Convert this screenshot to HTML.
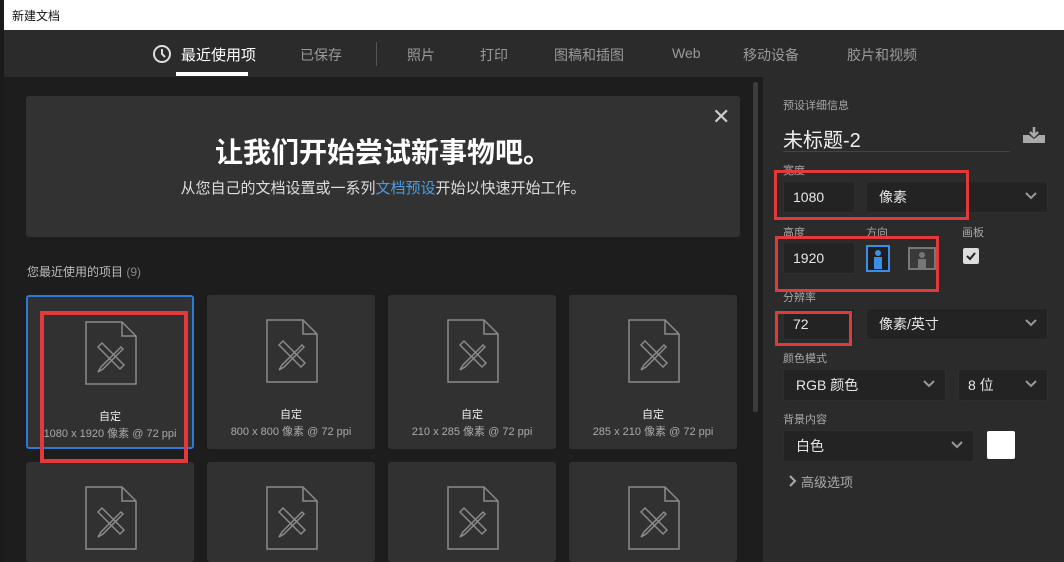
<!DOCTYPE html>
<html><head><meta charset="utf-8"><style>
*{margin:0;padding:0;box-sizing:border-box}
html,body{width:1064px;height:562px;overflow:hidden}
body{background:#1d1d1d;font-family:"Liberation Sans","Noto Sans CJK SC",sans-serif;position:relative}
.a{position:absolute}
.t{color:#9a9a9a;font-size:14px}
.card{position:absolute;background:#313131;border-radius:3px;overflow:hidden}
.card .ic{position:absolute;left:50%;margin-left:-27px;top:24px}
.card .n{position:absolute;width:100%;text-align:center;top:111px;color:#eee;font-size:11px}
.card .d{position:absolute;width:100%;text-align:center;top:128px;color:#aaa;font-size:11px}
.lbl{position:absolute;color:#a8a8a8;font-size:11px}
.box{position:absolute;background:#232323;border:1px solid #2e2e2e;border-radius:3px;color:#e6e6e6;font-size:14px;padding-left:9px;display:flex;align-items:center}
.chev{position:absolute;right:10px;top:50%;margin-top:-5px}
.red{position:absolute;border:3px solid #e23a3a}
</style></head><body>
<div class="a" style="left:0;top:0;width:1064px;height:30px;background:#fff"></div>
<div class="a" style="left:0;top:0;width:4px;height:562px;background:#1a1a1a"></div>
<div class="a" style="left:12px;top:7px;font-size:12px;color:#111">新建文档</div>
<div class="a" style="left:4px;top:30px;width:1060px;height:47px;background:#2b2b2b"></div>
<svg class="a" style="left:152px;top:44px" width="20" height="20" viewBox="0 0 20 20"><circle cx="10" cy="10" r="8" fill="none" stroke="#ddd" stroke-width="2"/><path d="M10 5v5l3 3" fill="none" stroke="#ddd" stroke-width="2"/></svg>
<div class="a" style="left:181px;top:44px;color:#fff;font-size:15px">最近使用项</div>
<div class="a" style="left:176px;top:72px;width:72px;height:4px;background:#fff"></div>
<div class="a t" style="left:300px;top:45px">已保存</div>
<div class="a" style="left:376px;top:42px;width:1px;height:24px;background:#555"></div>
<div class="a t" style="left:407px;top:45px">照片</div>
<div class="a t" style="left:480px;top:45px">打印</div>
<div class="a t" style="left:554px;top:45px">图稿和插图</div>
<div class="a t" style="left:672px;top:45px">Web</div>
<div class="a t" style="left:743px;top:45px">移动设备</div>
<div class="a t" style="left:847px;top:45px">胶片和视频</div>

<div class="a" style="left:753px;top:82px;width:5px;height:330px;background:#3c3c3c;border-radius:2px"></div>
<div class="a" style="left:763px;top:77px;width:301px;height:485px;background:#2b2b2b"></div>

<div class="a" style="left:26px;top:96px;width:714px;height:141px;background:#323232;border-radius:3px"></div>
<div class="a" style="left:712px;top:104px;color:#ccc;font-size:22px">✕</div>
<div class="a" style="left:0;width:766px;top:131px;text-align:center;color:#fff;font-size:28px;font-weight:bold">让我们开始尝试新事物吧。</div>
<div class="a" style="left:0;width:766px;top:177px;text-align:center;color:#ddd;font-size:15px">从您自己的文档设置或一系列<span style="color:#4b9be0">文档预设</span>开始以快速开始工作。</div>
<div class="a" style="left:27px;top:263px;color:#bbb;font-size:12px">您最近使用的项目 <span style="color:#888">(9)</span></div>

<svg width="0" height="0" style="position:absolute"><defs><g id="doc"><path d="M3 1h36l14 14v48H3z M39 1v14h14" fill="none" stroke="#8a8a8a" stroke-width="1.5"/><g fill="none" stroke="#8a8a8a" stroke-width="1.5"><path d="M15 26l22 22l4-4l-22-22z"/><path d="M38 26l-20 20l-3 5l5-3l20-20z"/></g></g></defs></svg>
<div class="card" style="left:26px;top:295px;width:168px;height:154px;border:2px solid #2d7ad6"><svg class="ic" width="56" height="66"><use href="#doc"/></svg><div class="n">自定</div><div class="d">1080 x 1920 像素 @ 72 ppi</div></div>
<div class="card" style="left:207px;top:295px;width:168px;height:154px"><svg class="ic" width="56" height="66"><use href="#doc"/></svg><div class="n">自定</div><div class="d">800 x 800 像素 @ 72 ppi</div></div>
<div class="card" style="left:388px;top:295px;width:168px;height:154px"><svg class="ic" width="56" height="66"><use href="#doc"/></svg><div class="n">自定</div><div class="d">210 x 285 像素 @ 72 ppi</div></div>
<div class="card" style="left:569px;top:295px;width:168px;height:154px"><svg class="ic" width="56" height="66"><use href="#doc"/></svg><div class="n">自定</div><div class="d">285 x 210 像素 @ 72 ppi</div></div>
<div class="card" style="left:26px;top:462px;width:168px;height:100px"><svg class="ic" width="56" height="66"><use href="#doc"/></svg></div>
<div class="card" style="left:207px;top:462px;width:168px;height:100px"><svg class="ic" width="56" height="66"><use href="#doc"/></svg></div>
<div class="card" style="left:388px;top:462px;width:168px;height:100px"><svg class="ic" width="56" height="66"><use href="#doc"/></svg></div>
<div class="card" style="left:569px;top:462px;width:168px;height:100px"><svg class="ic" width="56" height="66"><use href="#doc"/></svg></div>
<div class="red" style="left:40px;top:311px;width:148px;height:152px;border-width:4px"></div>

<div class="lbl" style="left:783px;top:97px">预设详细信息</div>
<div class="a" style="left:783px;top:124px;color:#f0f0f0;font-size:20px">未标题-2</div>
<div class="a" style="left:783px;top:151px;width:227px;height:1px;background:#444"></div>
<svg class="a" style="left:1022px;top:126px" width="24" height="18"><path d="M12 1v8M8 6l4 4l4-4" stroke="#aaa" stroke-width="2.5" fill="none"/><path d="M1 9h6l5 4l5-4h6v8H1z" fill="#aaa"/></svg>
<div class="lbl" style="left:783px;top:162px">宽度</div>
<div class="box" style="left:783px;top:181px;width:72px;height:32px">1080</div>
<div class="box" style="left:866px;top:181px;width:182px;height:32px;padding-left:12px">像素<svg class="chev" width="12" height="8"><path d="M1 1l5 5l5-5" stroke="#999" stroke-width="2" fill="none"/></svg></div>
<div class="red" style="left:774px;top:170px;width:195px;height:50px"></div>
<div class="lbl" style="left:783px;top:224px">高度</div>
<div class="lbl" style="left:866px;top:224px">方向</div>
<div class="lbl" style="left:962px;top:224px">画板</div>
<div class="box" style="left:783px;top:242px;width:72px;height:32px">1920</div>
<svg class="a" style="left:866px;top:245px" width="24" height="27"><rect x="1" y="1" width="22" height="25" fill="#1e1e1e" stroke="#3b8ee8" stroke-width="2"/><circle cx="12" cy="8" r="3" fill="#3b8ee8"/><rect x="8" y="12" width="8" height="12" fill="#3b8ee8"/></svg>
<svg class="a" style="left:908px;top:247px" width="28" height="23"><rect x="1" y="1" width="26" height="21" fill="#3a3a3a" stroke="#777" stroke-width="2"/><circle cx="14" cy="8" r="3" fill="#777"/><rect x="10" y="12" width="8" height="10" fill="#777"/></svg>
<div class="a" style="left:963px;top:248px;width:16px;height:16px;background:#ddd;border-radius:2px"></div>
<svg class="a" style="left:963px;top:248px" width="16" height="16"><path d="M4 8l3 3l5-6" stroke="#222" stroke-width="2" fill="none"/></svg>
<div class="red" style="left:775px;top:236px;width:164px;height:56px"></div>
<div class="lbl" style="left:783px;top:289px">分辨率</div>
<div class="box" style="left:783px;top:308px;width:72px;height:32px">72</div>
<div class="box" style="left:866px;top:308px;width:182px;height:32px;padding-left:12px">像素/英寸<svg class="chev" width="12" height="8"><path d="M1 1l5 5l5-5" stroke="#999" stroke-width="2" fill="none"/></svg></div>
<div class="red" style="left:775px;top:311px;width:77px;height:35px"></div>
<div class="lbl" style="left:783px;top:350px">颜色模式</div>
<div class="box" style="left:783px;top:369px;width:163px;height:32px;padding-left:12px">RGB 颜色<svg class="chev" width="12" height="8"><path d="M1 1l5 5l5-5" stroke="#999" stroke-width="2" fill="none"/></svg></div>
<div class="box" style="left:958px;top:369px;width:90px;height:32px">8 位<svg class="chev" width="12" height="8"><path d="M1 1l5 5l5-5" stroke="#999" stroke-width="2" fill="none"/></svg></div>
<div class="lbl" style="left:783px;top:411px">背景内容</div>
<div class="box" style="left:783px;top:430px;width:191px;height:32px;padding-left:12px">白色<svg class="chev" width="12" height="8"><path d="M1 1l5 5l5-5" stroke="#999" stroke-width="2" fill="none"/></svg></div>
<div class="a" style="left:987px;top:431px;width:28px;height:28px;background:#fff;border-radius:2px"></div>
<svg class="a" style="left:789px;top:475px" width="8" height="12"><path d="M1 1l5 5l-5 5" stroke="#aaa" stroke-width="2" fill="none"/></svg>
<div class="a" style="left:801px;top:472px;color:#aaa;font-size:13px">高级选项</div>
</body></html>
